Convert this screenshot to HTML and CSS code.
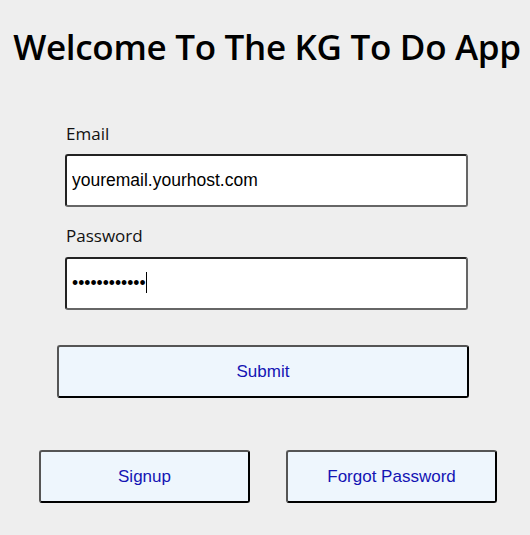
FILE: index.html
```html
<!DOCTYPE html>
<html lang="en">
<head>
<meta charset="utf-8">
<title>KG To Do App</title>
<link rel="stylesheet" href="styles.css">
</head>
<body>
<main class="page">
  <h1 class="title">Welcome To The KG To Do App</h1>
  <form class="login">
    <label class="field-label" for="email">Email</label>
    <input class="field-input" id="email" type="text" value="youremail.yourhost.com">
    <label class="field-label" for="password">Password</label>
    <div class="input-wrap">
      <input class="field-input" id="password" type="password" value="yourpassword">
      <span class="caret"></span>
    </div>
    <button class="btn btn-submit" type="button">Submit</button>
  </form>
  <div class="actions">
    <button class="btn btn-small" type="button">Signup</button>
    <button class="btn btn-small" type="button">Forgot Password</button>
  </div>
</main>
</body>
</html>
```
FILE: styles.css
```css
html, body {
  margin: 0;
  padding: 0;
  background: #eeeeee;
}
.page {
  display: flex;
  flex-direction: column;
  align-items: center;
  font-family: "Open Sans", sans-serif;
}
.title {
  margin: 22px 0 0 0;
  padding-left: 4px;
  font-size: 35px;
  font-weight: 600;
  line-height: 50px;
  color: #000;
  letter-spacing: -0.3px;
}
.login {
  display: flex;
  flex-direction: column;
  width: 412px;
  margin-top: 50px;
  margin-right: 4px;
}
.field-label {
  margin-left: 9px;
  font-size: 17px;
  line-height: 24px;
  color: #111;
}
.input-wrap {
  position: relative;
  display: flex;
}
.field-input {
  box-sizing: border-box;
  width: 403px;
  height: 53px;
  margin: 8px 0 0 8px;
  padding: 0 5px;
  border: 2px solid;
  border-color: #222 #666 #666 #222;
  border-radius: 3px;
  background: #fff;
  font-family: "Liberation Sans", Arial, sans-serif;
  font-size: 17.5px;
  color: #000;
  outline: none;
}
.input-wrap .field-input {
  margin-top: 9px;
}
.caret {
  position: absolute;
  left: 89px;
  top: 24px;
  width: 1px;
  height: 21px;
  background: #000;
}
.field-input + .field-label {
  margin-top: 17px;
}
.btn {
  box-sizing: border-box;
  height: 53px;
  border: 2px solid;
  border-color: #555 #000 #000 #555;
  border-radius: 3px;
  background: #eef6fd;
  font-family: "Liberation Sans", Arial, sans-serif;
  font-size: 17px;
  color: #1414b4;
  cursor: pointer;
}
.btn-submit {
  width: 412px;
  margin-top: 35px;
}
.actions {
  display: flex;
  gap: 36px;
  margin-top: 52px;
  margin-left: 6px;
}
.btn-small {
  width: 211px;
}
```
